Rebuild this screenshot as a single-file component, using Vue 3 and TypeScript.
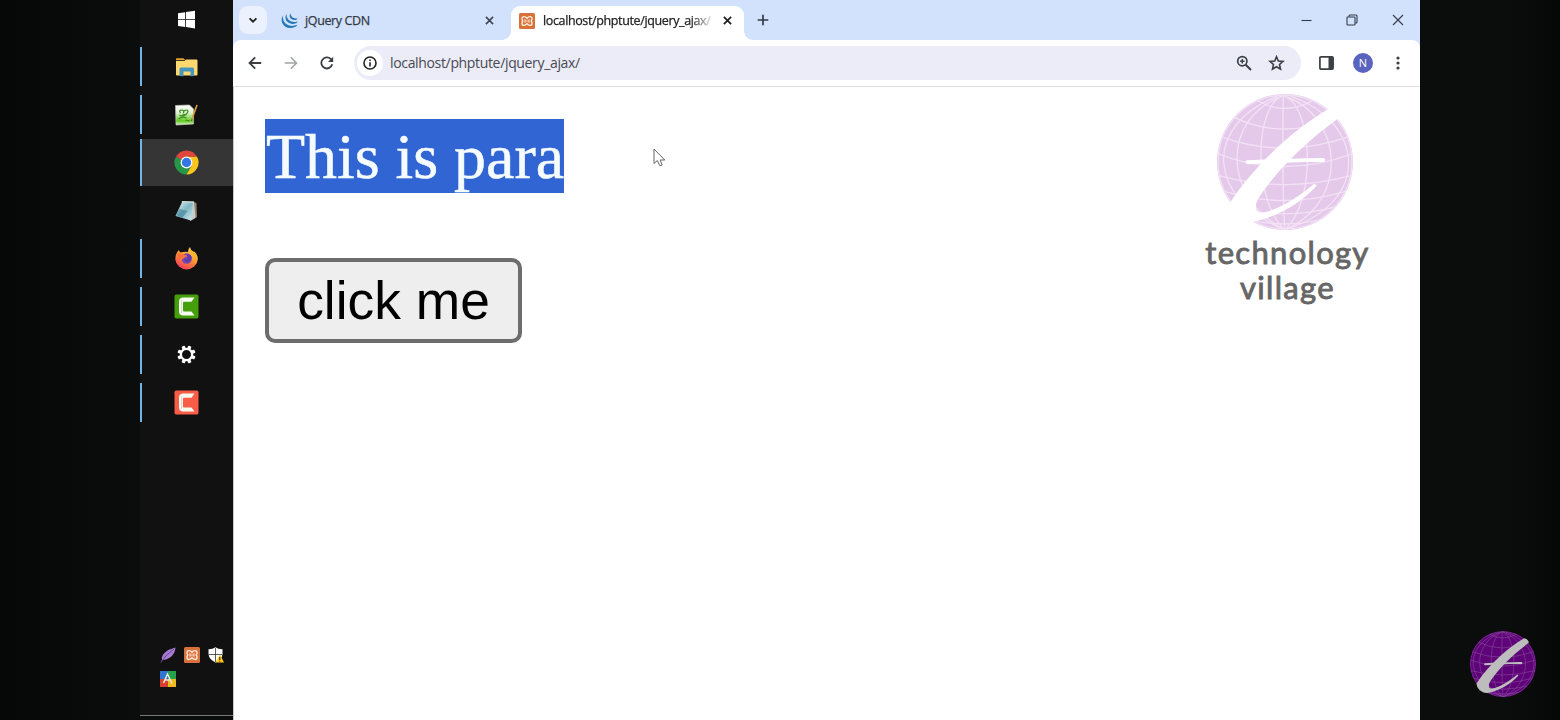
<script setup lang="ts">
interface TaskItem {
  name: string
  running?: boolean
  active?: boolean
}

const tasks: TaskItem[] = [
  { name: 'start' },
  { name: 'explorer', running: true },
  { name: 'notepadpp', running: true },
  { name: 'chrome', running: true, active: true },
  { name: 'notepad' },
  { name: 'firefox', running: true },
  { name: 'camtasia', running: true },
  { name: 'settings', running: true },
  { name: 'recorder', running: true },
]

const trayIcons: string[] = ['feather', 'xampp', 'shield', 'palette']
const address = 'localhost/phptute/jquery_ajax/'
</script>

<template>
  <div class="screen">
    <svg class="defs" width="0" height="0" aria-hidden="true">
      <defs>
        <linearGradient id="glass" x1="0" y1="0" x2="1" y2="1">
          <stop offset="0" stop-color="#e9f4f6" /><stop offset=".5" stop-color="#7fb6c4" /><stop offset="1" stop-color="#d3ecf1" />
        </linearGradient>
        <linearGradient id="fire" x1=".8" y1="0" x2=".3" y2="1">
          <stop offset="0" stop-color="#ffe14a" /><stop offset=".5" stop-color="#ff9431" /><stop offset="1" stop-color="#f3365c" />
        </linearGradient>
        <linearGradient id="frog" x1="0" y1="0" x2="0" y2="1">
          <stop offset="0" stop-color="#fff" /><stop offset=".4" stop-color="#dff0cf" /><stop offset=".8" stop-color="#5ecb1c" /><stop offset="1" stop-color="#e4f5d8" />
        </linearGradient>
        <clipPath id="globe-clip"><circle cx="285" cy="230" r="203" /></clipPath>
        <symbol id="xampp" viewBox="0 0 16 16">
          <rect width="16" height="16" rx="1.5" fill="#d9713a" />
          <path d="M8 5.300Q6.800 3.600 5 3.600Q3 3.600 3 5.600Q3 7 3.800 8Q3 9 3 10.400Q3 12.400 5 12.400Q6.800 12.400 8 10.700Q9.200 12.400 11 12.400Q13 12.400 13 10.400Q13 9 12.200 8Q13 7 13 5.600Q13 3.600 11 3.600Q9.200 3.600 8 5.300Z" fill="none" stroke="#fff0e2" stroke-width="1.300" />
          <path d="M6 6.300V9.700M10 6.300V9.700M6 8H10" stroke="#fbd9c0" stroke-width="1.200" />
        </symbol>
        <symbol id="globe" viewBox="82 27 406 406">
          <circle class="globe-fill" cx="285" cy="230" r="203" />
          <g class="globe-lines" clip-path="url(#globe-clip)">
            <circle cx="285" cy="230" r="200" />
            <path d="M205 48Q282 92 365 48M130 95Q280 168 440 95M96 155Q280 222 474 155M84 205Q280 282 488 205M86 270Q280 325 484 270M104 318Q282 372 466 318M135 365Q282 405 432 365M190 405Q284 425 380 405" />
            <path d="M280 32C278 150 278 320 284 432M280 32C190 60 190 350 284 432M280 32C370 60 380 350 284 432M280 32C90 100 100 340 284 432M280 32C460 90 480 350 284 432M262 34C40 120 50 340 284 432M304 34C520 110 550 350 284 432" />
          </g>
          <path class="globe-mark" d="M415 72C325 124 207 222 122 350C124 384 155 410 189 408C255 397 332 354 380 300L373 295C318 340 258 376 218 381C190 383 195 351 211 330C262 254 346 170 444 100C442 84 431 74 415 72Z" />
          <path class="globe-mark" d="M171 225C240 221 335 219 400 218Q411 223 400 230C320 229 245 234 174 237Q162 231 171 225Z" />
        </symbol>
      </defs>
    </svg>

    <aside class="taskbar">
      <div class="tasks">
        <div v-for="t in tasks" :key="t.name" class="task" :class="{ running: t.running, active: t.active }">
          <svg v-if="t.name === 'start'" width="24" height="24" viewBox="-.5 -.5 24 24">
            <path fill="#fff" d="M3.500 5.700L10.700 4.700V11.700H3.500ZM11.500 4.600L20.500 3.300V11.700H11.500ZM3.500 12.500H10.700V19.500L3.500 18.500ZM11.500 12.500H20.500V20.900L11.500 19.600Z" />
          </svg>
          <svg v-else-if="t.name === 'explorer'" width="24" height="24" viewBox="-.5 0 24 24">
            <path fill="#e2a32c" d="M1.500 4Q1.500 3.200 2.300 3.200H9L11 5.200H1.500Z" />
            <path fill="#ffd970" d="M1.500 6H10L11.500 4.500H22Q23 4.500 23 5.500V19.500Q23 20.500 22 20.500H2.500Q1.500 20.500 1.500 19.500Z" />
            <path fill="#4595bd" d="M5 14Q5 12.500 6.500 12.500H18Q19.500 12.500 19.500 14V20.500L18 21.300H16V16.500H9V21.300H6.500L5 20.500Z" />
          </svg>
          <svg v-else-if="t.name === 'notepadpp'" width="26" height="26" viewBox="-.5 0 26 26">
            <path fill="url(#frog)" stroke="#bec5b9" stroke-width=".7" d="M2 3.500L16 3L20 7V22L2.500 23Z" />
            <path fill="none" stroke="#3a8b20" stroke-width="1.200" d="M7 11Q5 8 8 8T10 11Q10 8 13 8T13 12Q9 15 6 13M5 17Q9 14 13 16M12 18L16 19M9 12L13 13" />
            <path stroke="#d69a37" stroke-width="1.700" d="M23.500 3L18.500 17" /><path stroke="#735023" d="M18.500 17L18 19" />
          </svg>
          <svg v-else-if="t.name === 'chrome'" class="wide" width="25" height="25" viewBox="-.5 -.5 25 25">
            <path fill="#269747" d="M12 12L1.600 6A12 12 0 0 0 12 24L17.200 15Z" />
            <path fill="#fbc51e" d="M12 6H22.400A12 12 0 0 1 12 24L17.200 15Z" />
            <path fill="#e2453a" d="M1.600 6A12 12 0 0 1 22.400 6H12L6.500 9Z" />
            <circle cx="12" cy="12" r="5.900" fill="#fff" /><circle cx="12" cy="12" r="4.700" fill="#3576e2" />
          </svg>
          <svg v-else-if="t.name === 'notepad'" width="26" height="26" viewBox="-.5 0 26 26">
            <path fill="#8f8069" d="M19 3.500L23 5L23.500 19L19 22Z" />
            <path fill="#c4cfd0" d="M8 3L20.500 3.500L22 19.500L17 23Z" />
            <path fill="url(#glass)" d="M8.500 4L19.500 5L17.500 22.500L2 18Z" />
            <path fill="none" stroke="#e6f5f7" stroke-width="1" stroke-dasharray="1 1" d="M9 3.500L20 4" />
            <path fill="#397b91" opacity=".55" d="M6 11L14 13L9 19.500L3 17.500Z" />
          </svg>
          <svg v-else-if="t.name === 'firefox'" width="24" height="24" viewBox="-.5 .5 24 24">
            <path fill="url(#fire)" d="M2.500 6L4 3.800L6 6L8.500 5.500Q11 5 13.500 5.500Q13.500 2.500 15.500.5Q16 4 19 6L20 5Q23.500 9 23.300 13A11.300 11 0 0 1 .8 13Q.7 9 2.500 6Z" />
            <path fill="#fbb326" d="M15 1Q15 4 18 7Q20 10 19 14Q23 9 19 5Q16 4 15 1Z" />
            <circle cx="12.200" cy="12" r="5.200" fill="#7548b8" />
            <path fill="#ff7138" d="M2.700 7Q7 6 10.500 8.500Q13 8.500 12.500 10Q9.500 10.500 9.500 12Q7 12 6.500 15Q2 12 2.700 7Z" />
            <path fill="#5534a0" d="M12 8Q15 7 17 10Q17 15 13.500 15.700Q9 15 9.500 12Q12 14 14 12Z" opacity=".6" />
          </svg>
          <svg v-else-if="t.name === 'camtasia' || t.name === 'recorder'" :class="t.name" width="25" height="25" viewBox="0 0 25 25">
            <rect class="plate" x=".5" y=".5" width="24" height="24" rx="1.700" />
            <path fill="#f6fbef" d="M20.500 3.500L17.500 7.700H10Q9 7.700 9 8.700V16.500Q9 17.500 10 17.500H17.500L20.500 21.500H8.500Q5 21 5 17.500V7.500Q5 4 8.500 3.500Z" />
            <path d="M7.500 6V19" stroke="#000" stroke-opacity=".18" stroke-width=".8" />
          </svg>
          <svg v-else width="20" height="20" viewBox="-.5 .5 20 20">
            <g fill="#fff">
              <rect v-for="a in 8" :key="a" x="8.300" y=".9" width="3.400" height="4.500" rx=".8" :transform="`rotate(${a * 45 - 22.5} 10 10)`" />
            </g>
            <circle cx="10" cy="10" r="5.600" fill="#111" stroke="#fff" stroke-width="2.200" />
          </svg>
        </div>
      </div>

      <div class="tray">
        <svg v-for="icon in trayIcons" :key="icon" width="16" height="16" viewBox="0 0 16 16">
          <template v-if="icon === 'feather'">
            <path fill="#a67bd2" d="M2 13Q1 9 5 5.500Q9 2 15.500.5Q15 7 10 10.500Q6 13 2.500 13L1 15.500H.5Z" />
            <path fill="none" stroke="#5b3b80" stroke-width=".8" d="M1 15.500Q5 8 14 2" />
          </template>
          <use v-else-if="icon === 'xampp'" href="#xampp" width="16" height="16" />
          <template v-else-if="icon === 'shield'">
            <path fill="#fff" d="M7.500.3Q10 2.300 14.500 2.300V7Q14 12.500 7.500 15.500Q1 12.500.5 7V2.300Q5 2.300 7.500.3Z" />
            <path stroke="#333" stroke-width=".8" d="M7.500 1V15M.7 7.500H14" />
            <path fill="#ffc91e" d="M12 7.500L16 15.500H7.500Z" /><path stroke="#332500" stroke-width="1" d="M11.800 10V13M11.800 13.800V14.700" />
          </template>
          <template v-else>
            <path fill="#2f74d0" d="M0 0H8V8H0Z" /><path fill="#27a04c" d="M8 0H16V8H8Z" />
            <path fill="#d6402e" d="M0 8H8V16H0Z" /><path fill="#f0b91c" d="M8 8H16V16H8Z" />
            <path fill="none" stroke="#e9e7d9" stroke-width="1.500" d="M3.500 12L7.500 3L12 12.500M5 9H10.500" />
          </template>
        </svg>
      </div>
    </aside>

    <main class="browser">
      <header class="tabstrip">
        <button class="tab-search">
          <svg width="10" height="10" viewBox="0 0 10 10"><path d="M1.600 3.400L5 6.600L8.400 3.400" fill="none" stroke="#222" stroke-width="1.900" /></svg>
        </button>
        <div class="tab">
          <svg width="17" height="16" viewBox="0 0 17 16" fill="#2378b5">
            <path d="M2.300 2Q-.8 7 1.800 11Q6 17.300 14.500 13.700Q16 13 16.300 11.800Q9 14.500 4.500 10.500Q.8 7 2.300 2Z" />
            <path d="M5.800.8Q3.300 4.500 5.500 8Q9.500 12.500 15.500 10Q16.300 9.500 16.500 8.400Q11 10 7.700 7Q5 4.200 5.800.8Z" />
            <path d="M9.600.2Q7.800 3 9.500 5.300Q12 8 15.800 6.500L16.600 5.200Q13 6 11 4Q9.300 2.500 9.600.2Z" />
          </svg>
          <span class="tab-title">jQuery CDN</span>
          <svg class="tab-close" width="9" height="9" viewBox="0 0 9 9"><path d="M.9.9L8.100 8.100M8.100.9L.9 8.100" stroke="#3c4250" stroke-width="1.500" /></svg>
        </div>
        <div class="tab current">
          <svg width="16" height="16"><use href="#xampp" width="16" height="16" /></svg>
          <span class="tab-title">{{ address }}</span>
          <svg class="tab-close" width="9" height="9" viewBox="0 0 9 9"><path d="M.9.900L8.100 8.100M8.100.9L.9 8.100" stroke="#222" stroke-width="1.800" /></svg>
        </div>
        <svg class="new-tab" width="12" height="12" viewBox="0 0 12 12"><path d="M6 .7V11.300M.7 6H11.300" stroke="#333a46" stroke-width="1.700" /></svg>
        <div class="window-controls">
          <svg width="11" height="11" viewBox="0 0 11 11"><path d="M.5 5.500H10.500" stroke="#333a48" stroke-width="1.100" /></svg>
          <svg width="12" height="12" viewBox="0 0 12 12" fill="none" stroke="#333a48" stroke-width="1.100"><rect x="1" y="3" width="8" height="8" rx=".8" /><path d="M3 2.800V2Q3 1 4 1H10Q11 1 11 2V8Q11 9 10 9H9.200" /></svg>
          <svg width="12" height="12" viewBox="0 0 12 12"><path d="M1 1L11 11M11 1L1 11" stroke="#333a48" stroke-width="1.100" /></svg>
        </div>
      </header>

      <div class="toolbar-back">
        <nav class="toolbar">
          <div class="nav-buttons">
            <svg width="14" height="14" viewBox="0 0 14 14" fill="none" stroke="#3c3f43" stroke-width="1.800"><path d="M13.200 7H2M7.200 1.300L1.500 7L7.200 12.700" /></svg>
            <svg width="14" height="14" viewBox="0 0 14 14" fill="none" stroke="#a3a4a8" stroke-width="1.600"><path d="M.8 7H12M6.800 1.300L12.500 7L6.800 12.700" /></svg>
            <svg width="14" height="14" viewBox="0 0 14 14"><path d="M12.200 8.300A5.500 5.500 0 1 1 10.900 3.200L12.200 4.500" fill="none" stroke="#3c3f43" stroke-width="1.800" /><path d="M13.200.8V6H8Z" fill="#3c3f43" /></svg>
          </div>
          <div class="omnibox">
            <span class="site-info">
              <svg width="14" height="14" viewBox="0 0 14 14"><circle cx="7" cy="7" r="6" fill="none" stroke="#222" stroke-width="1.600" /><path d="M7 6.200V10.500M7 3.500V5" stroke="#222" stroke-width="1.600" /></svg>
            </span>
            <span class="address">{{ address }}</span>
            <svg class="zoom-icon" width="16" height="16" viewBox="0 0 16 16" fill="none" stroke="#3c3f43"><circle cx="6.300" cy="6.200" r="4.600" stroke-width="1.700" /><path d="M9.700 9.700L15 15" stroke-width="2" /><path d="M6.300 4V8.400M4.100 6.200H8.500" stroke-width="1.400" /></svg>
            <svg class="star-icon" width="17" height="16" viewBox="0 0 17 16"><path d="M8.500 1.700L10.300 6L15 6.400L11.500 9.500L12.500 14.100L8.500 11.700L4.500 14.100L5.500 9.500L2 6.400L6.700 6Z" fill="none" stroke="#3c3f43" stroke-width="1.600" /></svg>
          </div>
          <svg class="side-panel" width="15" height="14" viewBox="0 0 15 14"><rect x=".9" y=".9" width="13.200" height="12.200" rx="1" fill="none" stroke="#3c3f43" stroke-width="1.700" /><path d="M9.500 1H14V13H9.500Z" fill="#3c3f43" /></svg>
          <span class="avatar">N</span>
          <svg class="more" width="4" height="14" viewBox="0 0 4 14" fill="#3c3f43"><circle cx="2" cy="2" r="1.600" /><circle cx="2" cy="7" r="1.600" /><circle cx="2" cy="12" r="1.600" /></svg>
        </nav>
      </div>

      <section class="page">
        <div class="content">
          <p class="para"><span>This is para</span></p>
          <button class="click-me">click me</button>
        </div>
        <div class="brand">
          <svg class="brand-globe" width="136" height="136"><use href="#globe" width="136" height="136" /></svg>
          <span class="brand-top">technology</span>
          <span class="brand-bottom">village</span>
        </div>
      </section>
    </main>

    <svg class="pointer" width="13" height="19" viewBox="0 0 13 19"><path d="M1 1V15.500L4.300 12.500L6.700 17.500Q8 18 9.200 17L7.200 12H11.800Z" fill="#fff" stroke="#666" stroke-width="1" /></svg>
    <svg class="corner-globe" width="66" height="66"><use href="#globe" width="66" height="66" /></svg>
  </div>
</template>

<style>
body { margin: 0; overflow: hidden; background: #090b0a; }
</style>

<style scoped>
.screen {
  position: relative;
  display: flex;
  box-sizing: border-box;
  width: 1560px;
  height: 720px;
  padding: 0 140px;
  overflow: hidden;
  background: linear-gradient(90deg, #060807 0, #0a0d0c 140px, #0a0d0c 1420px, #0a0d0c 1510px, #060807 100%);
  font-family: "Open Sans", "Noto Sans", sans-serif;
}
.screen svg { display: block; flex: none; }
.screen .defs { position: absolute; }
button { font: inherit; margin: 0; border: 0; padding: 0; }

.taskbar {
  display: flex;
  flex-direction: column;
  justify-content: space-between;
  box-sizing: border-box;
  flex: none;
  width: 93px;
  height: 716px;
  border-bottom: 1px solid #777;
  background: #111;
}
.tasks { display: flex; flex-direction: column; gap: 1px; margin-top: -5px; }
.task {
  display: flex;
  align-items: center;
  height: 47px;
  box-sizing: border-box;
  padding-right: 1px;
}
.task svg { margin: 0 auto; }
.task.running::before { content: ""; width: 2px; height: 39px; margin-right: -2px; background: #74b4e2; }
.task.active { background: #353535; }
.task.active::before { height: 47px; }
.plate { fill: #459e0b; }
.recorder .plate { fill: #fa5d47; }
.tray { display: grid; grid-template-columns: repeat(3, 16px); gap: 8px; padding: 0 0 28px 20px; }

.browser { display: flex; flex-direction: column; width: 1187px; background: #fff; box-shadow: inset 1px 0 #c8c8c8; }
.tabstrip {
  display: flex;
  align-items: flex-end;
  box-sizing: border-box;
  height: 40px;
  padding-left: 6px;
  background: #d2e1fc;
}
.tab-search {
  display: flex;
  align-items: center;
  justify-content: center;
  width: 28px;
  height: 28px;
  margin-bottom: 6px;
  border-radius: 9px;
  background: #ebf2fe;
}
.tab { position: relative; display: flex; align-items: center; box-sizing: border-box; width: 244px; height: 34px; padding: 0 17px 5px 14px; }
.tab-title { flex: 1; margin: 1px 0 0 7px; color: #333a45; font-size: 12.500px; line-height: 18px; letter-spacing: -.37px; white-space: nowrap; -webkit-text-stroke: .25px; }
.tab.current { width: 233px; padding: 0 12px 5px 8px; border-radius: 9px 9px 0 0; background: #fff; }
.tab.current .tab-title {
  flex: none;
  width: 168px;
  margin-left: 8px;
  margin-right: auto;
  color: #222;
  mask-image: linear-gradient(90deg, #000 88%, rgba(0, 0, 0, .15) 100%);
}
.current::before, .current::after { content: ""; position: absolute; bottom: 0; width: 9px; height: 9px; }
.current::before { left: -9px; background: radial-gradient(circle at 0 0, transparent 8.500px, #fff 9px); }
.current::after { right: -9px; background: radial-gradient(circle at 100% 0, transparent 8.500px, #fff 9px); }
.new-tab { margin: 0 0 14px 13px; }
.window-controls { display: flex; align-items: center; gap: 34px; height: 40px; margin-left: auto; padding-right: 16px; }

.toolbar-back { flex: none; background: #d2e1fc; }
.toolbar {
  display: flex;
  align-items: center;
  box-sizing: border-box;
  height: 47px;
  padding: 0 20px 0 15px;
  border-bottom: 1px solid #dedfe3;
  border-radius: 8px 8px 0 0;
  background: #fff;
}
.nav-buttons { display: flex; gap: 22px; }
.omnibox { display: flex; align-items: center; box-sizing: border-box; width: 947px; height: 34px; margin-left: 20px; padding: 0 16px 0 3px; border-radius: 17px; background: #ebecf7; }
.site-info { display: flex; align-items: center; justify-content: center; width: 26px; height: 26px; border-radius: 50%; background: #fff; }
.address { flex: 1; margin-left: 7px; color: #484a50; font-size: 14px; line-height: 20px; letter-spacing: -.34px; white-space: nowrap; }
.star-icon { margin-left: 16px; }
.side-panel { margin-left: 18px; }
.avatar { width: 20px; height: 20px; margin-left: 19px; border-radius: 50%; background: #5a63bd; color: #fff; font-size: 11px; line-height: 20px; text-align: center; }
.more { margin-left: auto; }

.page { display: flex; justify-content: space-between; padding: 0 51px 0 32px; }
.content { display: flex; flex-direction: column; align-items: flex-start; padding-top: 32px; }
.para { margin: 0; color: #f5fcff; font: 64px/74px "Liberation Serif", serif; }
.para span { display: block; box-sizing: border-box; width: 299px; height: 74px; padding: 1px 0 0 1px; white-space: nowrap; letter-spacing: -.05px; -webkit-text-stroke: .5px; background: #3165d4; }
.click-me {
  box-sizing: border-box;
  width: 257px;
  height: 85px;
  margin-top: 64.500px;
  border: 4px solid #6d6d6d;
  border-radius: 10px;
  background: #eee;
  color: #000;
  font: 53.330px/61px "Liberation Sans", sans-serif;
}
.brand { display: flex; flex-direction: column; align-items: center; width: 164px; padding-top: 7px; color: #666; font: 400 31px/36px Lato, sans-serif; letter-spacing: 1.300px; -webkit-text-stroke: .9px; white-space: nowrap; }
.brand-globe { --globe: #e4c9ea; --lines: #f3e1f5; --mark: #fff; margin-left: -4px; -webkit-text-stroke: 0; }
.brand-top { margin: 4px 0 0 1px; }
.brand-bottom { margin: -1px 0 0 1px; }
.globe-fill { fill: var(--globe); }
.globe-lines { fill: none; stroke: var(--lines); stroke-width: 4px; }
.globe-mark { fill: var(--mark); }
.pointer { position: absolute; left: 653px; top: 148px; }
.corner-globe { --globe: #5e0378; --lines: #87459b; --mark: #bdbdbd; position: absolute; left: 1470px; top: 631px; }
</style>
